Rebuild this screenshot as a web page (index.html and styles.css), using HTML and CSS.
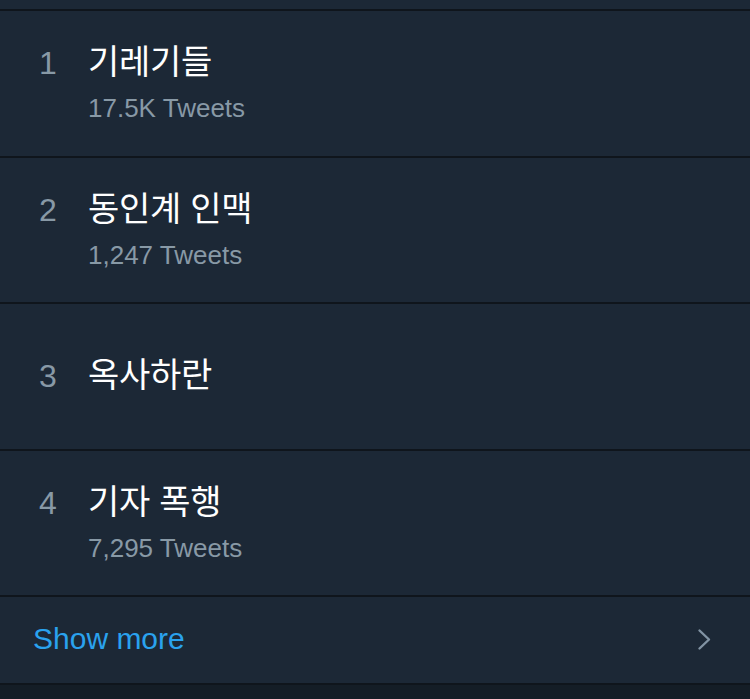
FILE: index.html
```html
<!DOCTYPE html>
<html lang="ko">
<head>
<meta charset="utf-8">
<link rel="stylesheet" href="styles.css">
</head>
<body>
<div class="page">
  <div class="top"></div>
  <ul class="trends">
    <li class="trend with-count">
      <span class="rank">1</span>
      <div class="info">
        <div class="title">기레기들</div>
        <div class="count">17.5K Tweets</div>
      </div>
    </li>
    <li class="trend with-count">
      <span class="rank">2</span>
      <div class="info">
        <div class="title">동인계 인맥</div>
        <div class="count">1,247 Tweets</div>
      </div>
    </li>
    <li class="trend">
      <span class="rank">3</span>
      <div class="info">
        <div class="title">옥사하란</div>
      </div>
    </li>
    <li class="trend with-count">
      <span class="rank">4</span>
      <div class="info">
        <div class="title">기자 폭행</div>
        <div class="count">7,295 Tweets</div>
      </div>
    </li>
    <li class="more">
      <span class="more-label">Show more</span>
      <svg class="chev" width="15" height="23" viewBox="0 0 15 23"><path d="M2.5 2.5 L12 11.5 L2.5 20.5" fill="none" stroke="#8193a3" stroke-width="2.4" stroke-linecap="round" stroke-linejoin="round"/></svg>
    </li>
  </ul>
  <div class="bottom"></div>
</div>
</body>
</html>
```
FILE: styles.css
```css
html, body {
  margin: 0;
  padding: 0;
  background: #141d26;
}
.page {
  width: 750px;
  height: 699px;
  display: flex;
  flex-direction: column;
  background: #141d26;
  font-family: "Liberation Sans", Arial, sans-serif;
}
.top {
  height: 9px;
  background: #1c2836;
  border-bottom: 2px solid #0f151c;
}
.trends {
  list-style: none;
  margin: 0;
  padding: 0;
}
.trend {
  height: 144.5px;
  display: grid;
  grid-template-columns: 88px 1fr;
  align-content: center;
  align-items: baseline;
  background: #1c2836;
  border-bottom: 2px solid #0f151c;
}
.trend .info {
  display: flex;
  flex-direction: column;
}
.with-count .info {
  padding-bottom: 4px;
}
.trend:not(.with-count) .info {
  padding-bottom: 6px;
}
.rank {
  padding-left: 39px;
  color: #8899a6;
  font-size: 32px;
  line-height: 44px;
}
.title {
  color: #ffffff;
  font-family: "Noto Sans CJK KR", "Noto Sans", sans-serif;
  font-size: 34px;
  line-height: 44px;
  letter-spacing: -0.3px;
}
.count {
  color: #8899a6;
  font-size: 26px;
  line-height: 32px;
  margin-top: 10px;
}
.more {
  height: 86px;
  display: flex;
  align-items: center;
  justify-content: space-between;
  padding: 0 38px 0 33px;
  background: #1c2836;
  border-bottom: 2px solid #0f151c;
}
.more-label {
  color: #2aa2ee;
  font-size: 30px;
  padding-bottom: 2px;
}
.chev {
  display: block;
  margin-bottom: 2px;
}
.bottom {
  flex: 1;
  background: #141d26;
}
```
